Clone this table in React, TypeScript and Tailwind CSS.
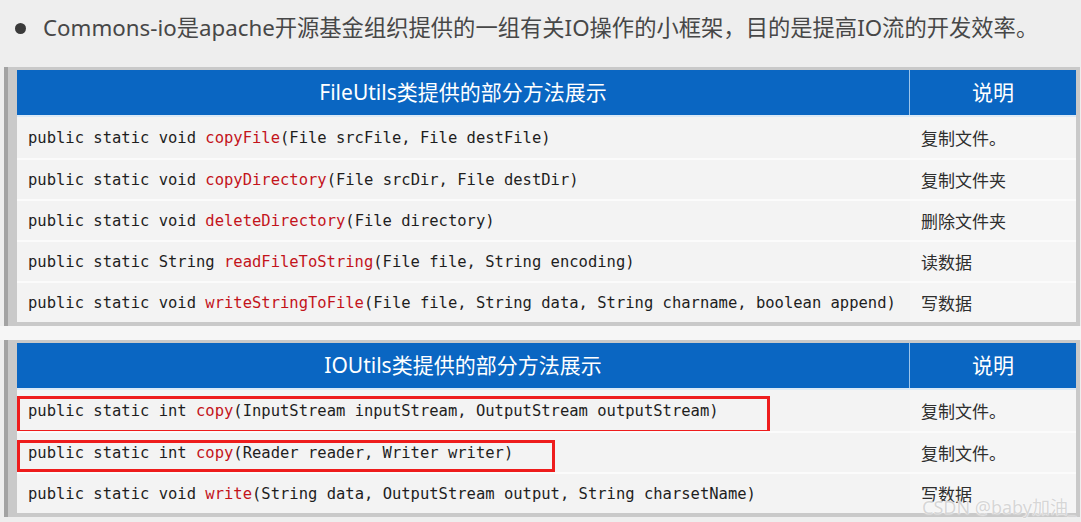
import React from "react";

type Row = { pre: string; fn: string; post: string; desc: string };

const t1: Row[] = [
  { pre: "public static void ", fn: "copyFile", post: "(File srcFile, File destFile)", desc: "复制文件。" },
  { pre: "public static void ", fn: "copyDirectory", post: "(File srcDir, File destDir)", desc: "复制文件夹" },
  { pre: "public static void ", fn: "deleteDirectory", post: "(File directory)", desc: "删除文件夹" },
  { pre: "public static String ", fn: "readFileToString", post: "(File file, String encoding)", desc: "读数据" },
  { pre: "public static void ", fn: "writeStringToFile", post: "(File file, String data, String charname, boolean append)", desc: "写数据" },
];

const t2: Row[] = [
  { pre: "public static int ", fn: "copy", post: "(InputStream inputStream, OutputStream outputStream)", desc: "复制文件。" },
  { pre: "public static int ", fn: "copy", post: "(Reader reader, Writer writer)", desc: "复制文件。" },
  { pre: "public static void ", fn: "write", post: "(String data, OutputStream output, String charsetName)", desc: "写数据" },
];

const cjk = { fontFamily: '"Noto Sans", "Noto Sans CJK SC", sans-serif' };
const mono = { fontFamily: '"DejaVu Sans Mono", "Liberation Mono", monospace' };

function Table({ title, rows, boxes }: { title: string; rows: Row[]; boxes?: number[] }) {
  return (
    <div className="ml-[4px] w-[1076px] bg-[#c9c9c9] border-l-[4px] border-[#a3a3a3] pl-[9px] pr-[4px] pt-[3px] pb-[4px]">
      <div className="flex h-[45px] bg-[#0a66c2] text-white text-[21px]" style={cjk}>
        <div className="w-[893px] flex items-center justify-center border-r border-[#9cc4ea]">{title}</div>
        <div className="flex-1 flex items-center justify-center">说明</div>
      </div>
      <div className="h-[2px] bg-[#dbe9f6]" />
      {rows.map((r, i) => (
        <div key={i} className={`relative flex h-[41px] bg-[#f3f3f3] ${i > 0 ? "border-t-[2px] border-[#fbfbfb]" : ""}`}>
          <div className="w-[893px] flex items-center pl-[11px] pt-[2px] text-[15.5px] text-[#1e1e1e] whitespace-pre" style={mono}>
            <span>{r.pre}</span>
            <span className="text-[#c3131b]">{r.fn}</span>
            <span>{r.post}</span>
          </div>
          <div className="flex-1 flex items-center pl-[11px] pt-[2px] text-[17px] text-[#2e2e2e] bg-[#f5f5f5]" style={cjk}>
            {r.desc}
          </div>
          {boxes && boxes[i] ? (
            <div
              className={`absolute left-0 border-[3px] border-[#ee1c1c] ${i === 0 ? "top-[6px] h-[37px] w-[753px]" : "top-[7px] h-[32px] w-[538px]"}`}
            />
          ) : null}
        </div>
      ))}
    </div>
  );
}

export default function App() {
  return (
    <div className="relative w-[1081px] h-[522px] overflow-hidden bg-[#eeeeee]">
      <div className="flex items-center h-[56px] pl-[15px] text-[22.3px] text-[#474747]" style={cjk}>
        <span className="w-[11px] h-[11px] rounded-full bg-[#3a3a3a] mr-[17px]" />
        <span>Commons-io是apache开源基金组织提供的一组有关IO操作的小框架，目的是提高IO流的开发效率。</span>
      </div>
      <div className="mt-[11px]">
        <Table title="FileUtils类提供的部分方法展示" rows={t1} />
      </div>
      <div className="h-[14px] bg-[#f6f6f6]" />
      <Table title="IOUtils类提供的部分方法展示" rows={t2} boxes={[1, 1, 0]} />
      <div
        className="absolute right-[5px] bottom-[1px] text-[18px] text-[#d6d6d6]"
        style={{ ...cjk, textShadow: "0 0 1px #ffffff, 0 0 2px #ffffff" }}
      >
        CSDN @baby加油_
      </div>
    </div>
  );
}
